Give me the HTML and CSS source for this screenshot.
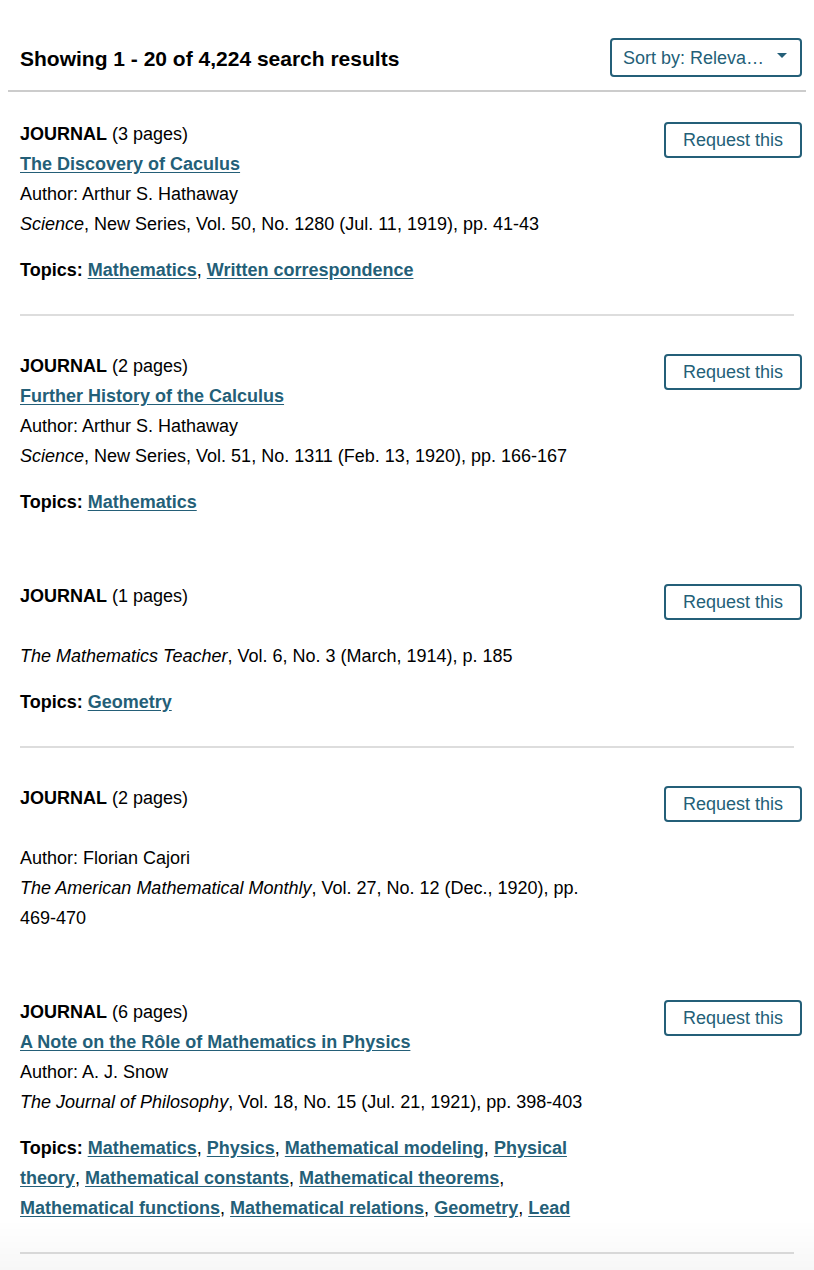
FILE: index.html
```html
<!DOCTYPE html>
<html lang="en">
<head>
<meta charset="utf-8">
<title>Search results</title>
<link rel="stylesheet" href="styles.css">
</head>
<body>
<div class="results-header">
  <h2 class="results-count">Showing 1 - 20 of 4,224 search results</h2>
  <button class="sort-btn"><span>Sort by: Releva…</span><span class="caret"></span></button>
</div>
<div class="results">
  <div class="item">
    <div class="info">
      <div class="line"><strong>JOURNAL</strong> (3 pages)</div>
      <div class="line"><a class="title" href="#">The Discovery of Caculus</a></div>
      <div class="line">Author: Arthur S. Hathaway</div>
      <div class="line"><em>Science</em>, New Series, Vol. 50, No. 1280 (Jul. 11, 1919), pp. 41-43</div>
      <div class="topics"><strong>Topics:</strong> <a href="#">Mathematics</a>, <a href="#">Written correspondence</a></div>
    </div>
    <button class="req-btn">Request this</button>
  </div>
  <div class="item no-divider">
    <div class="info">
      <div class="line"><strong>JOURNAL</strong> (2 pages)</div>
      <div class="line"><a class="title" href="#">Further History of the Calculus</a></div>
      <div class="line">Author: Arthur S. Hathaway</div>
      <div class="line"><em>Science</em>, New Series, Vol. 51, No. 1311 (Feb. 13, 1920), pp. 166-167</div>
      <div class="topics"><strong>Topics:</strong> <a href="#">Mathematics</a></div>
    </div>
    <button class="req-btn">Request this</button>
  </div>
  <div class="item">
    <div class="info">
      <div class="line"><strong>JOURNAL</strong> (1 pages)</div>
      <div class="line empty"></div>
      <div class="line"><em>The Mathematics Teacher</em>, Vol. 6, No. 3 (March, 1914), p. 185</div>
      <div class="topics"><strong>Topics:</strong> <a href="#">Geometry</a></div>
    </div>
    <button class="req-btn">Request this</button>
  </div>
  <div class="item no-divider">
    <div class="info">
      <div class="line"><strong>JOURNAL</strong> (2 pages)</div>
      <div class="line empty"></div>
      <div class="line">Author: Florian Cajori</div>
      <div class="line"><em>The American Mathematical Monthly</em>, Vol. 27, No. 12 (Dec., 1920), pp. 469-470</div>
    </div>
    <button class="req-btn">Request this</button>
  </div>
  <div class="item">
    <div class="info">
      <div class="line"><strong>JOURNAL</strong> (6 pages)</div>
      <div class="line"><a class="title" href="#">A Note on the Rôle of Mathematics in Physics</a></div>
      <div class="line">Author: A. J. Snow</div>
      <div class="line"><em>The Journal of Philosophy</em>, Vol. 18, No. 15 (Jul. 21, 1921), pp. 398-403</div>
      <div class="topics"><strong>Topics:</strong> <a href="#">Mathematics</a>, <a href="#">Physics</a>, <a href="#">Mathematical modeling</a>, <a href="#">Physical theory</a>, <a href="#">Mathematical constants</a>, <a href="#">Mathematical theorems</a>, <a href="#">Mathematical functions</a>, <a href="#">Mathematical relations</a>, <a href="#">Geometry</a>, <a href="#">Lead</a></div>
    </div>
    <button class="req-btn">Request this</button>
  </div>
</div>
<div class="bottom-fade"></div>
</body>
</html>
```
FILE: styles.css
```css
html, body {
  margin: 0;
  padding: 0;
  background: #fff;
}
body {
  padding: 0 8px;
  font-family: "Liberation Sans", Arial, sans-serif;
  font-size: 18px;
  color: #000;
}
.results-header {
  display: flex;
  align-items: center;
  justify-content: space-between;
  padding: 38px 4px 13px 12px;
  border-bottom: 2px solid #cccccc;
}
.results-count {
  margin: 0;
  padding-top: 3px;
  font-size: 21px;
  font-weight: bold;
  line-height: 24px;
}
.sort-btn {
  display: flex;
  align-items: center;
  justify-content: space-between;
  width: 192px;
  height: 39px;
  padding: 1px 13px 0 11px;
  border: 2px solid #245f78;
  border-radius: 4px;
  background: #fff;
  color: #245f78;
  font-family: "Liberation Sans", Arial, sans-serif;
  font-size: 18px;
  white-space: nowrap;
  cursor: pointer;
}
.caret {
  width: 0;
  height: 0;
  border-left: 5px solid transparent;
  border-right: 5px solid transparent;
  border-top: 5px solid #245f78;
  margin-top: -6px;
}
.results {
  padding: 0 12px;
}
.item {
  display: flex;
  justify-content: space-between;
  align-items: flex-start;
  padding: 35px 0 29px;
  border-bottom: 2px solid #dddddd;
}
.item:first-child {
  padding-top: 27px;
}
.item.no-divider {
  border-bottom: none;
}
.info {
  width: 580px;
  line-height: 30px;
}
.line.empty {
  height: 30px;
}
a {
  color: #245f78;
  font-weight: bold;
  text-decoration: underline;
  text-underline-offset: 2px;
}
.topics {
  margin-top: 16px;
}
.req-btn {
  margin-top: 3px;
  margin-right: -8px;
  width: 138px;
  height: 36px;
  padding: 0;
  border: 2px solid #245f78;
  border-radius: 4px;
  background: #fff;
  color: #245f78;
  font-family: "Liberation Sans", Arial, sans-serif;
  font-size: 18px;
  cursor: pointer;
}
.bottom-fade {
  position: fixed;
  left: 0;
  right: 0;
  bottom: 0;
  height: 50px;
  background: linear-gradient(to bottom, rgba(0,0,0,0), rgba(0,0,0,0.03));
  pointer-events: none;
}
```
